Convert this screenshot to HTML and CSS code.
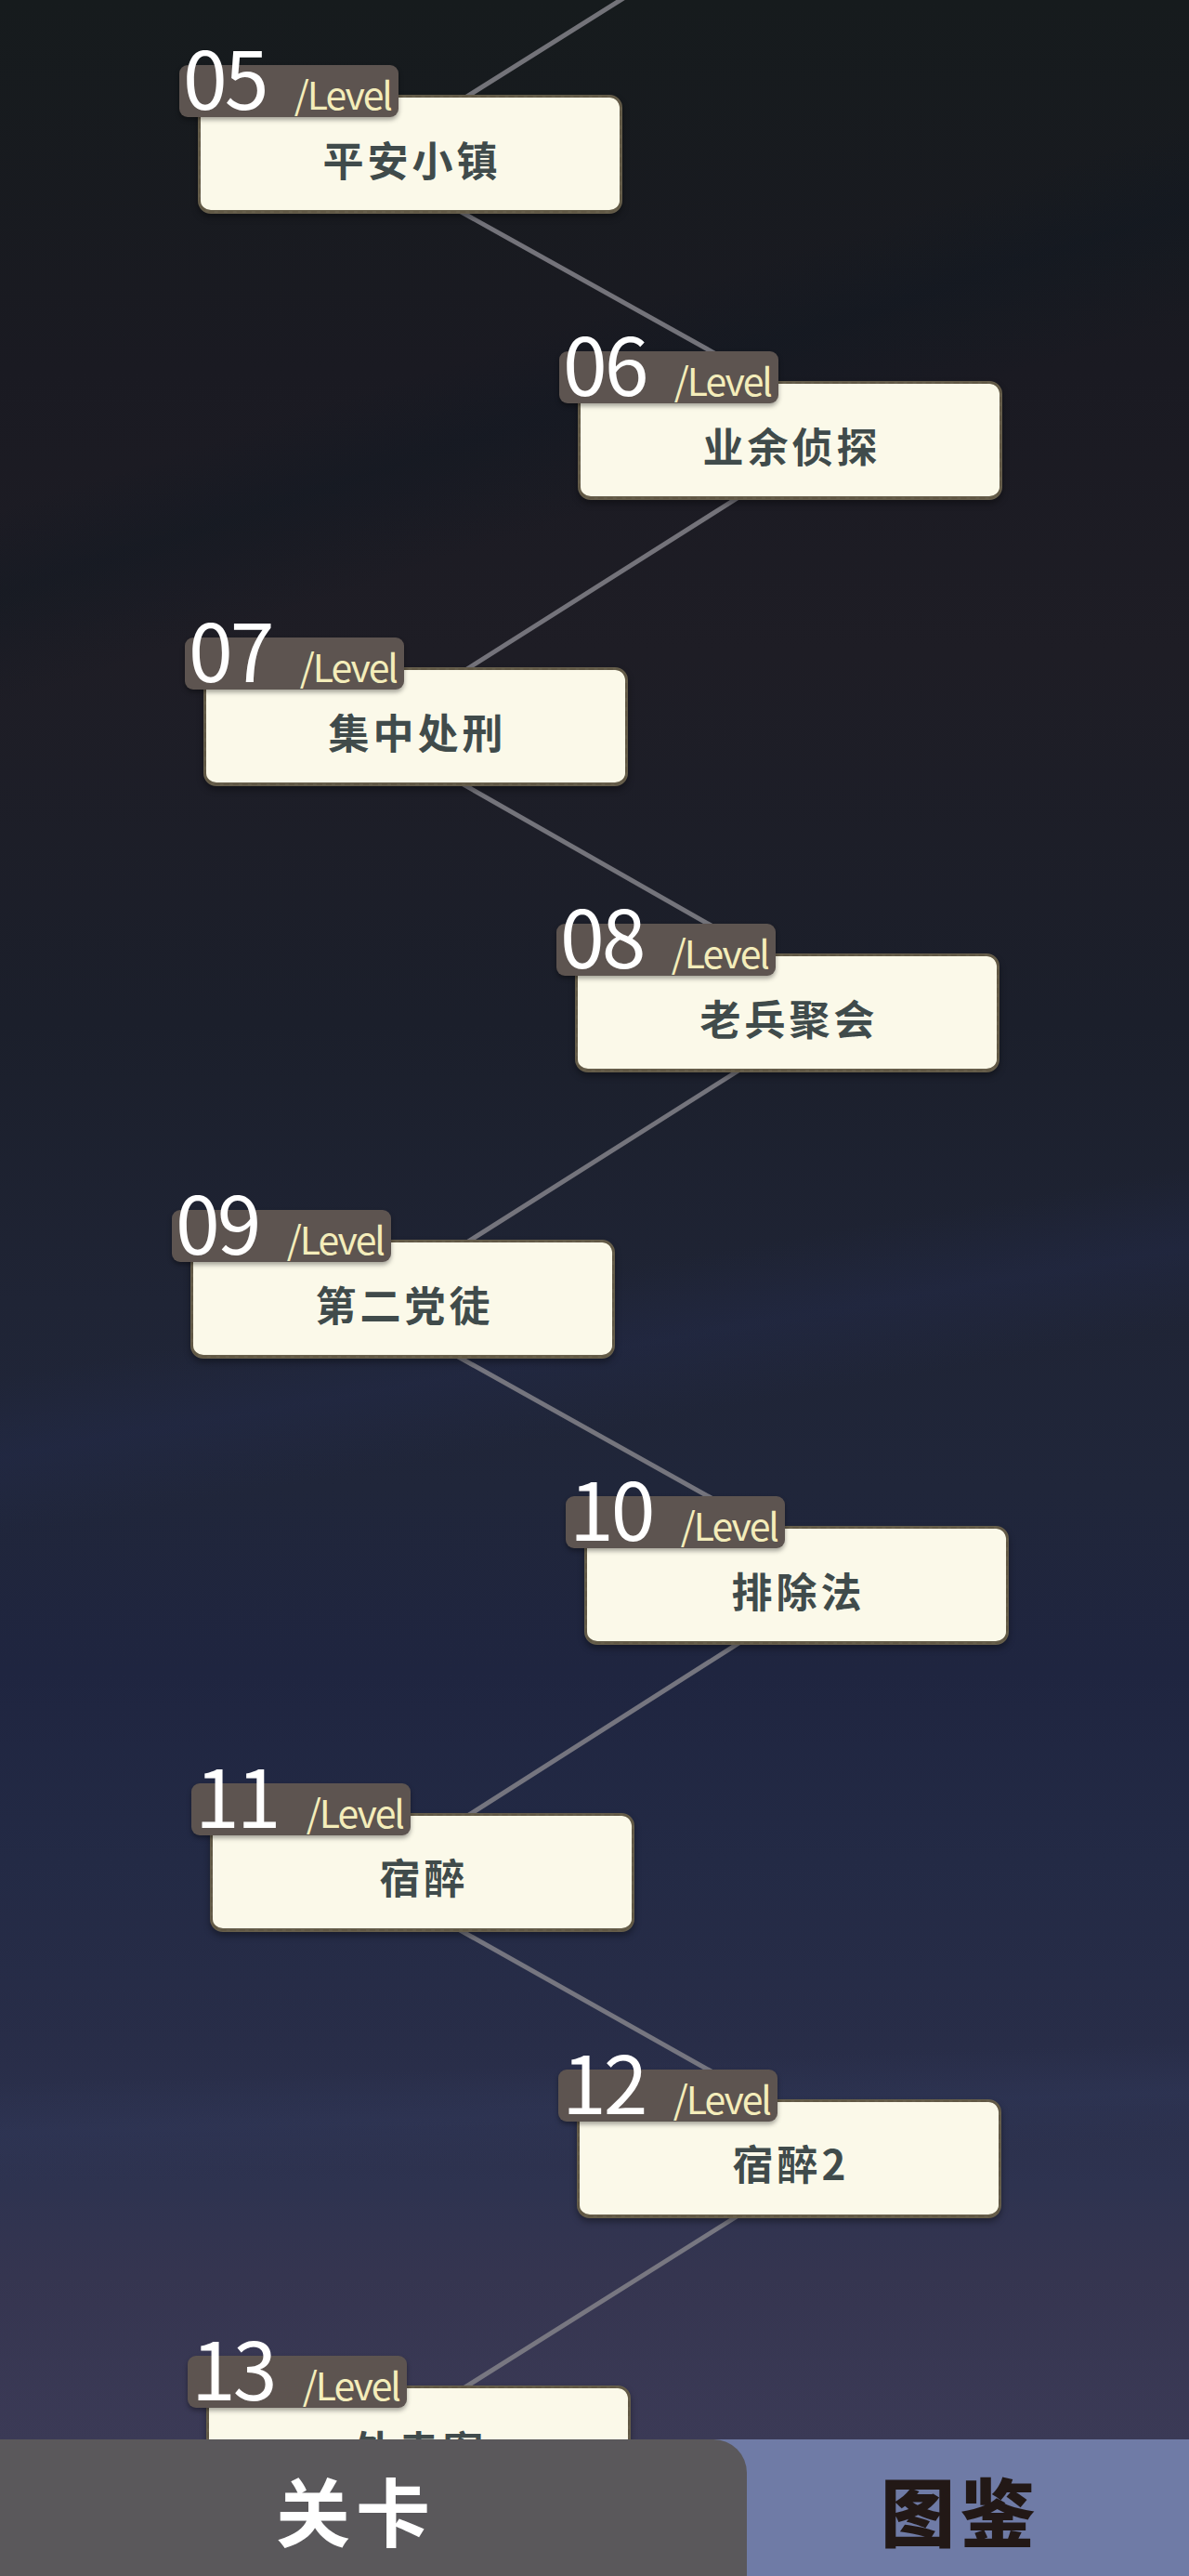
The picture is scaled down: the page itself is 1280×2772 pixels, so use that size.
FILE: index.html
```html
<!DOCTYPE html>
<html lang="zh-CN">
<head>
  <meta charset="UTF-8">
  <meta name="viewport" content="width=device-width, initial-scale=1.0">
  <title>关卡</title>
  <link rel="stylesheet" href="styles.css">
</head>
<body>
  <div class="stage">
    <svg class="path" width="1280" height="2625" viewBox="0 0 1280 2625">
      <line x1="684" y1="-10" x2="477" y2="120"/>
      <line x1="473" y1="215" x2="805" y2="400"/>
      <line x1="819" y1="520" x2="479" y2="735"/>
      <line x1="474" y1="830" x2="799" y2="1015"/>
      <line x1="814" y1="1140" x2="474" y2="1355"/>
      <line x1="470" y1="1447" x2="798" y2="1630"/>
      <line x1="816" y1="1755" x2="478" y2="1970"/>
      <line x1="472" y1="2064" x2="803" y2="2250"/>
      <line x1="814" y1="2372" x2="467" y2="2590"/>
    </svg>

    <ul class="levels">
      <li class="level" style="--x: 193px">
        <div class="badge"><span class="num">05</span><span class="tag">/Level</span></div>
        <div class="card">平安小镇</div>
      </li>
      <li class="level" style="--x: 602px">
        <div class="badge"><span class="num">06</span><span class="tag">/Level</span></div>
        <div class="card">业余侦探</div>
      </li>
      <li class="level" style="--x: 199px">
        <div class="badge"><span class="num">07</span><span class="tag">/Level</span></div>
        <div class="card">集中处刑</div>
      </li>
      <li class="level" style="--x: 599px">
        <div class="badge"><span class="num">08</span><span class="tag">/Level</span></div>
        <div class="card">老兵聚会</div>
      </li>
      <li class="level" style="--x: 185px">
        <div class="badge"><span class="num">09</span><span class="tag">/Level</span></div>
        <div class="card">第二党徒</div>
      </li>
      <li class="level" style="--x: 609px">
        <div class="badge"><span class="num">10</span><span class="tag">/Level</span></div>
        <div class="card">排除法</div>
      </li>
      <li class="level" style="--x: 206px">
        <div class="badge"><span class="num">11</span><span class="tag">/Level</span></div>
        <div class="card">宿醉</div>
      </li>
      <li class="level" style="--x: 601px">
        <div class="badge"><span class="num">12</span><span class="tag">/Level</span></div>
        <div class="card">宿醉2</div>
      </li>
      <li class="level" style="--x: 202px">
        <div class="badge"><span class="num">13</span><span class="tag">/Level</span></div>
        <div class="card">外卖案</div>
      </li>
    </ul>
  </div>

  <nav class="tabs">
    <div class="tab active">关卡</div>
    <div class="tab">图鉴</div>
  </nav>
</body>
</html>
```

FILE: styles.css
```css
body {
  margin: 0;
  width: 1280px;
  font-family: "Noto Sans CJK SC", "Noto Sans", sans-serif;
  background: #3b3a56;
}
.stage {
  position: relative;
  height: 2625px;
  overflow: hidden;
  background:
    linear-gradient(162deg, transparent 18%, rgba(14, 24, 34, 0.35) 21%, transparent 25%),
    linear-gradient(170deg, transparent 52%, rgba(36, 44, 80, 0.35) 55%, transparent 58%),
    linear-gradient(178deg, transparent 84%, rgba(48, 56, 90, 0.4) 86%, transparent 88%),
    linear-gradient(180deg,
      #161b1d 0px,
      #1a1a22 400px,
      #1e1d25 700px,
      #1b1f2b 1100px,
      #1f2435 1400px,
      #20263a 1600px,
      #1f2540 1800px,
      #232a45 2000px,
      #282d48 2200px,
      #2e3350 2350px,
      #353550 2450px,
      #3b3a56 2625px);
}
.path {
  position: absolute;
  top: 0;
  left: 0;
}
.path line {
  stroke: #84838a;
  stroke-width: 5;
  stroke-linecap: round;
  opacity: 0.85;
}
.levels {
  position: relative;
  list-style: none;
  margin: 0;
  padding: 70px 0 0;
  display: flex;
  flex-direction: column;
  gap: 148.1px;
}
.level {
  margin-left: var(--x);
  width: 477px;
  display: flex;
  flex-direction: column;
  align-items: flex-start;
}
.badge {
  position: relative;
  z-index: 2;
  box-sizing: border-box;
  width: 236px;
  height: 56px;
  padding: 0 8px 0 4px;
  display: flex;
  align-items: baseline;
  justify-content: space-between;
  background: #5d5450;
  border-radius: 9px;
  box-shadow: 0 3px 5px rgba(0, 0, 0, 0.35);
}
.num {
  font-size: 86px;
  line-height: 86px;
  margin-top: -45px;
  color: #fff;
  letter-spacing: -3px;
}
.tag {
  font-size: 41px;
  color: #f4edba;
  letter-spacing: -2px;
}
.card {
  box-sizing: border-box;
  width: 457px;
  height: 128px;
  margin: -24px 0 0 20px;
  padding: 10px 0 0 4px;
  display: flex;
  align-items: center;
  justify-content: center;
  background: #fbf9e9;
  border: 3px solid #665e4b;
  border-bottom-width: 4px;
  border-radius: 14px;
  outline: 2px dashed rgba(90, 80, 60, 0.45);
  outline-offset: -3px;
  box-shadow: 0 4px 7px rgba(0, 0, 0, 0.35);
  color: #404b4b;
  font-size: 44px;
  font-weight: 700;
  letter-spacing: 4px;
}
.tabs {
  display: flex;
  height: 147px;
  background: #6f7ba6;
}
.tab {
  flex: 1;
  display: flex;
  align-items: center;
  justify-content: center;
  padding-right: 16px;
  font-size: 80px;
  font-weight: 900;
  color: #221816;
  letter-spacing: 6px;
}
.tab.active {
  flex: none;
  width: 804px;
  box-sizing: border-box;
  padding-right: 38px;
  background: #5a585b;
  border-top-right-radius: 36px;
  color: #fff;
  font-weight: 700;
}
```
